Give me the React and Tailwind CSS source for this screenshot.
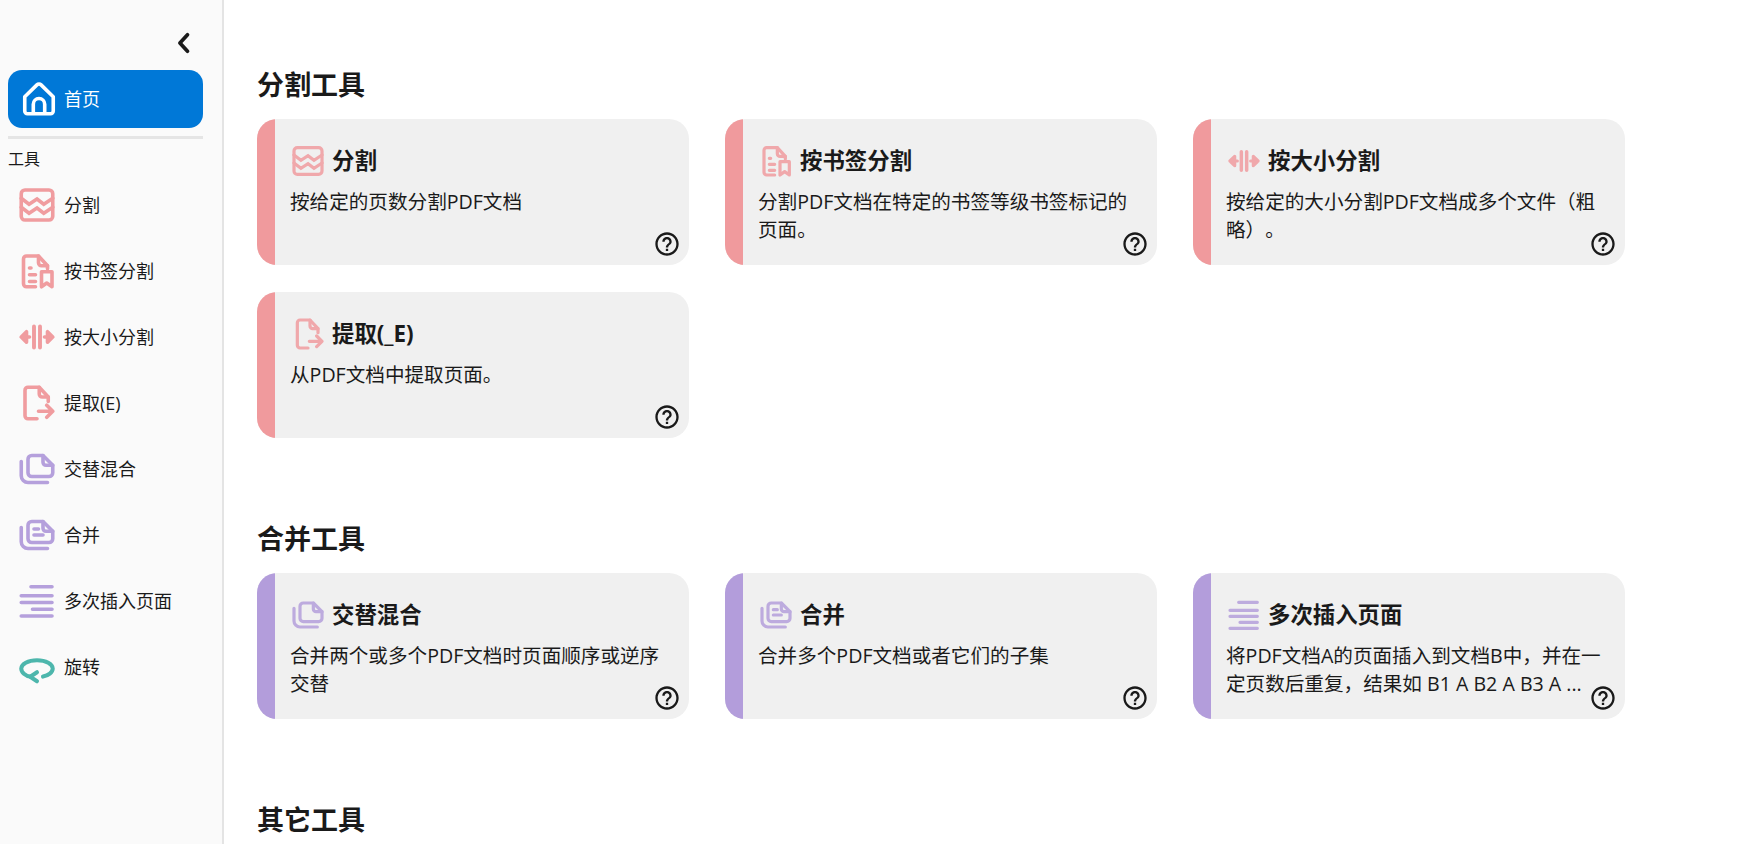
import React from 'react';

const PINK = '#f09c9f';
const PURPLE = '#b5a0dc';
const TEAL = '#4db6ac';

const Svg = ({ size = 36, color, children, className = '' }) => (
    <svg
        width={size}
        height={size}
        viewBox="0 0 24 24"
        fill="none"
        stroke={color}
        strokeWidth="2.4"
        strokeLinecap="round"
        strokeLinejoin="round"
        className={`shrink-0 ${className}`}
    >
        {children}
    </svg>
);

const HomeIcon = (p) => (
    <Svg {...p}>
        <path d="M2.5 10.5 10.6 2.6a2 2 0 0 1 2.8 0l8.1 7.900v9.500a1.800 1.800 0 0 1-1.800 1.800H4.300a1.800 1.800 0 0 1-1.800-1.800z" />
        <path d="M8.200 21.500v-6a3.800 3.800 0 0 1 7.600 0v6" />
    </Svg>
);

const SplitIcon = (p) => (
    <Svg {...p}>
        <rect x="1.500" y="2" width="21" height="20" rx="2.500" />
        <path d="M1.500 7.500l5.200 4 5.300-3.500 4.500 3.500 6-4" strokeLinejoin="miter" />
        <path d="M1.500 13.500l5.200 4 5.300-3.500 4.500 3.500 6-4" strokeLinejoin="miter" />
    </Svg>
);

const BookmarkIcon = (p) => (
    <Svg {...p}>
        <path d="M11 22.500H5a2 2 0 0 1-2-2V4a2 2 0 0 1 2-2h8l6 6.500v2" />
        <path d="M13 2v4.500a2 2 0 0 0 2 2h4" />
        <path d="M7 10h1M7 14.500h4M7 19h4" />
        <path d="M15 12.500h7v10l-3.500-2.500-3.500 2.500z" />
    </Svg>
);

const SizeIcon = (p) => (
    <Svg {...p}>
        <path d="M10 5v14M14 5v14" strokeWidth="2.600" />
        <path d="M7 12H1.500M1.500 12 5 8.500v7zM17 12h5.500M22.500 12 19 8.500v7z" strokeWidth="2.400" />
    </Svg>
);

const ExtractIcon = (p) => (
    <Svg {...p}>
        <path d="M12 22.500H6a2 2 0 0 1-2-2V3.500a2 2 0 0 1 2-2h7.500l6 6.500v3" />
        <path d="M13.500 1.500v4.500a2 2 0 0 0 2 2h4" />
        <path d="M13 17.500h9M18.500 13.500l4 4-4 4" />
    </Svg>
);

const StackIcon = ({ lines, ...p }) => (
    <Svg {...p}>
        <path d="M6 5.500a2.500 2.500 0 0 1 2.500-2.500H16l6.500 6.500v5a2.500 2.500 0 0 1-2.500 2.500H8.500A2.500 2.500 0 0 1 6 14.500z" />
        <path d="M16 3v4.500a2 2 0 0 0 2 2h4.500" />
        <path d="M1.500 7v9.500a4.500 4.500 0 0 0 4.500 4.500h13" />
        {lines && <path d="M10 8h3M10 12h6" />}
    </Svg>
);

const InsertIcon = (p) => (
    <Svg {...p}>
        <path d="M8 2.500h14M1.500 8.500h20.500M1.500 13h20.500M9 17.500h13M1.500 22h20.500" />
    </Svg>
);

const RotateIcon = (p) => (
    <Svg {...p}>
        <path d="M8 18.500C4 18 1.500 15.500 1.500 13c0-3 4.500-5.500 10.500-5.500s10.500 2.500 10.500 5.500c0 2.500-3 4.800-6.500 5.400" strokeWidth="2.700" />
        <path d="M12 15.500l-4.500 3 4.500 3" strokeWidth="2.700" />
    </Svg>
);

const HelpIcon = () => (
    <svg width="28" height="28" viewBox="0 0 24 24" fill="#1a1a1a" className="absolute right-[8px] bottom-[7px]">
        <path d="M11 18h2v-2h-2v2zm1-16C6.480 2 2 6.480 2 12s4.480 10 10 10 10-4.480 10-10S17.520 2 12 2zm0 18c-4.410 0-8-3.590-8-8s3.590-8 8-8 8 3.590 8 8-3.590 8-8 8zm0-14c-2.210 0-4 1.790-4 4h2c0-1.100.9-2 2-2s2 .9 2 2c0 2-3 1.750-3 5h2c0-2.250 3-2.500 3-5 0-2.210-1.790-4-4-4z" />
    </svg>
);

const navItems = [
    { label: '分割', Icon: SplitIcon, color: PINK },
    { label: '按书签分割', Icon: BookmarkIcon, color: PINK },
    { label: '按大小分割', Icon: SizeIcon, color: PINK },
    { label: '提取(E)', Icon: ExtractIcon, color: PINK },
    { label: '交替混合', Icon: StackIcon, color: PURPLE },
    { label: '合并', Icon: StackIcon, color: PURPLE, lines: true },
    { label: '多次插入页面', Icon: InsertIcon, color: PURPLE },
    { label: '旋转', Icon: RotateIcon, color: TEAL },
];

const sections = [
    {
        title: '分割工具',
        stripe: 'bg-[#f09a9d]',
        color: PINK,
        cards: [
            { title: '分割', desc: '按给定的页数分割PDF文档', Icon: SplitIcon },
            { title: '按书签分割', desc: '分割PDF文档在特定的书签等级书签标记的页面。', Icon: BookmarkIcon },
            { title: '按大小分割', desc: '按给定的大小分割PDF文档成多个文件（粗略）。', Icon: SizeIcon },
            { title: '提取(_E)', desc: '从PDF文档中提取页面。', Icon: ExtractIcon },
        ],
    },
    {
        title: '合并工具',
        stripe: 'bg-[#b39ddb]',
        color: PURPLE,
        cards: [
            { title: '交替混合', desc: '合并两个或多个PDF文档时页面顺序或逆序交替', Icon: StackIcon },
            { title: '合并', desc: '合并多个PDF文档或者它们的子集', Icon: StackIcon, lines: true },
            { title: '多次插入页面', desc: '将PDF文档A的页面插入到文档B中，并在一定页数后重复，结果如 B1 A B2 A B3 A ...', Icon: InsertIcon },
        ],
    },
    { title: '其它工具', cards: [] },
];

const ToolCard = ({ card, stripe, color }) => {
    const { Icon } = card;
    return (
        <div className="relative flex h-[146px] overflow-hidden rounded-[20px] bg-[#f0f0f0]">
            <div className={`w-[18px] shrink-0 ${stripe}`} />
            <div className="min-w-0 flex-1 pl-[15px] pr-[19px] pt-[24px]">
                <div className="flex h-[36px] items-center">
                    <div className="flex w-[37px] shrink-0 justify-center pr-[1px]">
                        <Icon size={32} color={color} lines={card.lines} className="opacity-85" />
                    </div>
                    <span className="ml-[5px] text-[22.4px] font-bold leading-none text-[#1a1a1a]">{card.title}</span>
                </div>
                <p className="mt-[9px] text-[19.6px] leading-[27.5px] text-[#1a1a1a] [text-spacing-trim:space-all]">{card.desc}</p>
            </div>
            <HelpIcon />
        </div>
    );
};

export default function App() {
    return (
        <div
            className="flex h-screen overflow-hidden bg-white"
            style={{ fontFamily: '"Open Sans", "Noto Sans CJK SC", sans-serif' }}
        >
            <aside className="w-[224px] shrink-0 border-r-2 border-[#e4e4e4] bg-[#fafafa] px-2">
                <div className="flex h-[70px] items-center justify-end pr-[6px] pt-[16px]">
                    <svg width="28" height="28" viewBox="0 0 24 24" fill="none" stroke="#1a1a1a" strokeWidth="3.200" strokeLinecap="round" strokeLinejoin="round" className="mr-[10px]">
                        <path d="M15 5l-6.500 7 6.500 7" />
                    </svg>
                </div>
                <div className="flex h-[58px] w-[195px] items-center gap-[7px] rounded-[14px] bg-[#0078d7] pl-[13px] text-[18px] text-white">
                    <HomeIcon size={36} color="#ffffff" />
                    <span>首页</span>
                </div>
                <div className="mt-2 h-[3px] w-[195px] bg-[#e5e5e5]" />
                <div className="flex h-[33px] items-center pt-[7px] text-[16px] text-[#1a1a1a]">工具</div>
                <nav>
                    {navItems.map(({ label, Icon, color, lines }) => (
                        <div key={label} className="flex h-[66px] items-center gap-[9px] pl-[11px] text-[18px] text-[#1a1a1a]">
                            <Icon size={36} color={color} lines={lines} />
                            <span>{label}</span>
                        </div>
                    ))}
                </nav>
            </aside>

            <main className="min-w-0 flex-1 pl-[33px] pt-[66px]">
                {sections.map((section) => (
                    <section key={section.title} className="mb-[82px]">
                        <h2 className="mb-[15px] text-[27px] font-bold leading-[38px] text-[#1a1a1a]">{section.title}</h2>
                        <div className="grid grid-cols-[432px_432px_432px] gap-x-[36px] gap-y-[27px]">
                            {section.cards.map((card) => (
                                <ToolCard key={card.title} card={card} stripe={section.stripe} color={section.color} />
                            ))}
                        </div>
                    </section>
                ))}
            </main>
        </div>
    );
}
